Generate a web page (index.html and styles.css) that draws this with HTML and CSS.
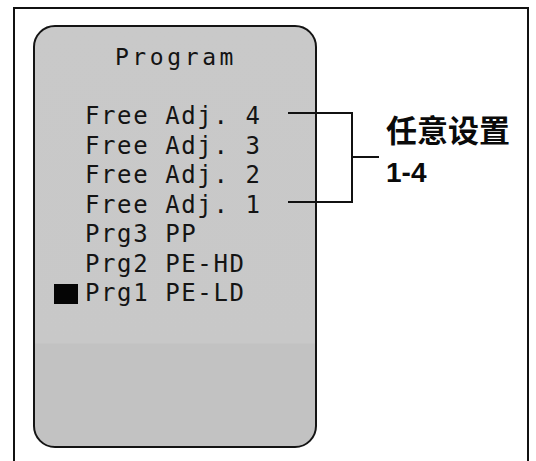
FILE: index.html
```html
<!DOCTYPE html>
<html lang="zh">
<head>
<meta charset="utf-8">
<title>Program</title>
<link rel="stylesheet" href="styles.css">
</head>
<body>
<div class="frame">
  <div class="panel">
    <div class="title">Program</div>
    <ul class="list">
      <li>Free Adj. 4</li>
      <li>Free Adj. 3</li>
      <li>Free Adj. 2</li>
      <li>Free Adj. 1</li>
      <li>Prg3 PP</li>
      <li>Prg2 PE-HD</li>
      <li><span class="marker"></span>Prg1 PE-LD</li>
    </ul>
  </div>
  <div class="bracket"></div>
  <div class="label">
    <div class="label-zh">任意设置</div>
    <div class="label-num">1-4</div>
  </div>
</div>
</body>
</html>
```
FILE: styles.css
```css
html, body {
  margin: 0;
  padding: 0;
  background: #ffffff;
  overflow: hidden;
}
body {
  width: 536px;
  height: 461px;
}
.frame {
  position: relative;
  box-sizing: border-box;
  margin: 7px 0 0 13px;
  width: 516px;
  height: 480px;
  border: 2px solid #111;
  padding: 16px 0 0 18px;
}
.panel {
  box-sizing: border-box;
  width: 284px;
  height: 423px;
  border: 2px solid #141414;
  border-radius: 22px;
  background: linear-gradient(#c9c9c9 0, #c8c8c8 316px, #c2c2c2 317px, #c2c2c2 100%);
  padding-top: 18px;
  font-family: "DejaVu Sans Mono", monospace;
  color: #141414;
}
.title {
  font-size: 23px;
  line-height: 24px;
  letter-spacing: 3.6px;
  text-align: center;
  padding-left: 2px;
}
.list {
  list-style: none;
  margin: 33px 0 0 0;
  padding: 0 0 0 50px;
  font-size: 24px;
  line-height: 29.5px;
  letter-spacing: 1.6px;
  white-space: nowrap;
}
.list li {
  margin: 0;
}
.marker {
  display: inline-block;
  width: 24px;
  height: 20px;
  background: #050505;
  margin-left: -31px;
  margin-right: 7px;
  vertical-align: -3px;
}
.bracket {
  position: absolute;
  left: 273px;
  top: 103px;
  width: 63px;
  height: 87px;
  border: 2px solid #111;
  border-left: none;
}
.bracket::after {
  content: "";
  position: absolute;
  left: 63px;
  top: 42px;
  width: 28px;
  height: 2px;
  background: #111;
}
.label {
  position: absolute;
  left: 371px;
  top: 100px;
  color: #0a0a0a;
}
.label-zh {
  font-family: "Noto Sans CJK SC", sans-serif;
  font-weight: 700;
  font-size: 31px;
  line-height: 40px;
}
.label-num {
  font-family: "Liberation Sans", Arial, sans-serif;
  font-weight: 700;
  font-size: 28px;
  line-height: 30px;
  margin-top: 9px;
}
```
